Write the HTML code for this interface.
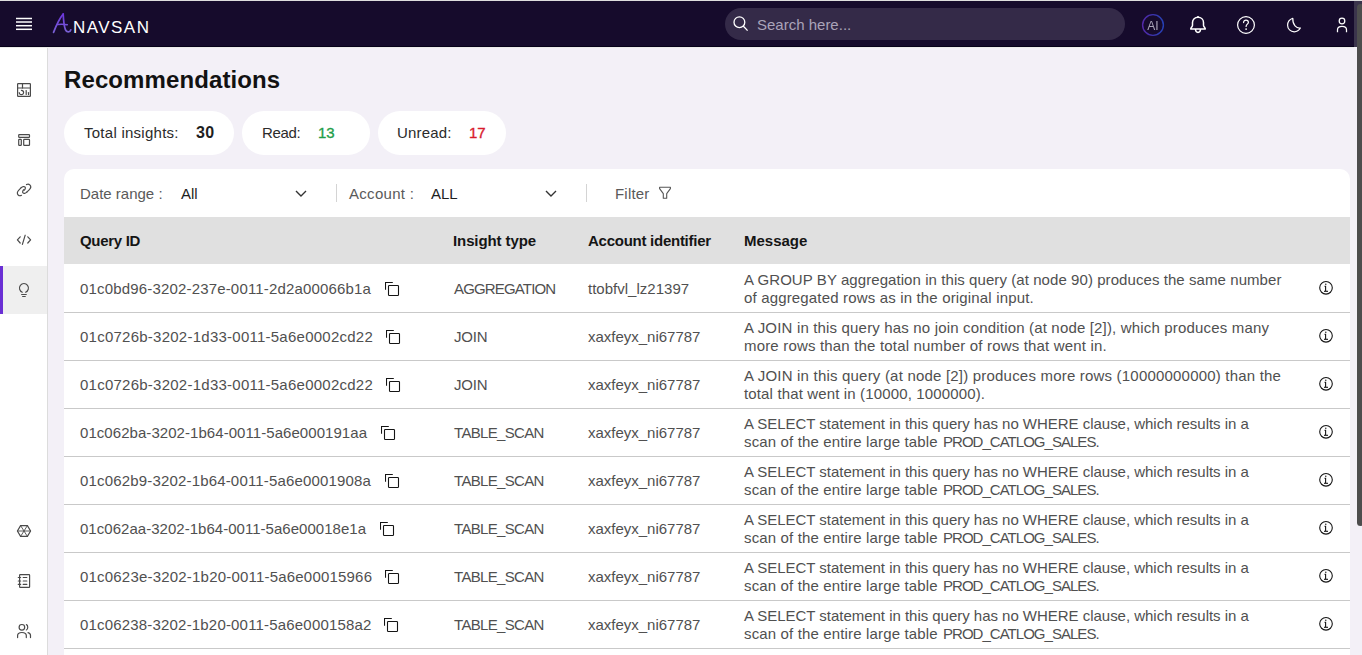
<!DOCTYPE html>
<html><head><meta charset="utf-8">
<style>
*{box-sizing:border-box;margin:0;padding:0}
html,body{width:1362px;height:655px;overflow:hidden;background:#f3f0f7;font-family:"Liberation Sans",sans-serif;}
.abs{position:absolute}
#topline{left:0;top:0;width:1362px;height:1px;background:#dedede}
#hdr{left:0;top:1px;width:1354px;height:45px;background:#160b2c}
#hdrline{left:0;top:46px;width:1354px;height:1px;background:#07011a}
#hdrshadow{left:0;top:47px;width:1354px;height:1px;background:#ececea}
#track{left:1354px;top:1px;width:8px;height:46px;background:#3b344c}
#thumb{left:1357px;top:4px;width:7px;height:522px;background:#4d4d4d;border-radius:4px}
#side{left:0;top:48px;width:47px;height:607px;background:#fff}
#sideborder{left:47px;top:48px;width:1px;height:607px;background:#dcdcdc}
.txt{white-space:nowrap;line-height:18px;font-size:15px}
#search{left:725px;top:8px;width:400px;height:32px;border-radius:16px;background:#342a48}
#title{left:64px;top:66px;font-size:24px;font-weight:700;color:#121212;line-height:28px;white-space:nowrap}
.card{top:111px;height:44px;border-radius:22px;background:#fff}
#filter{left:64px;top:169px;width:1286px;height:490px;background:#fff;border-radius:10px 10px 0 0}
#thead{left:64px;top:217px;width:1286px;height:47px;background:#e0e0e0}
.th{font-weight:700;color:#151515}
.td{color:#505050}
.rowline{left:64px;width:1286px;height:1px;background:#c9c9c9}
.sep{width:1px;height:18px;top:184px;background:#d4d4d4}
</style></head><body>
<div class="abs" id="topline"></div>
<div class="abs" id="hdr"></div>
<div class="abs" id="hdrline"></div>
<div class="abs" id="hdrshadow"></div>
<div class="abs" id="track"></div>

<!-- hamburger -->
<svg class="abs" style="left:0;top:0" width="48" height="47">
  <g stroke="#fff" stroke-width="1.5">
    <line x1="16" y1="18.5" x2="32" y2="18.5"/>
    <line x1="16" y1="22" x2="32" y2="22"/>
    <line x1="16" y1="25.7" x2="32" y2="25.7"/>
    <line x1="16" y1="29.3" x2="32" y2="29.3"/>
  </g>
</svg>
<!-- logo -->
<svg class="abs" style="left:0;top:0" width="80" height="47">
  <defs><linearGradient id="lg" x1="0" y1="13" x2="0" y2="33" gradientUnits="userSpaceOnUse"><stop offset="0" stop-color="#6c34de"/><stop offset="1" stop-color="#7a62d4"/></linearGradient></defs>
  <g fill="none" stroke="url(#lg)" stroke-linecap="round">
    <path d="M53.6,32.3 C55.8,26.5 58.8,19.5 63.2,14" stroke-width="1.8"/>
    <path d="M63.2,14 C63.5,20.5 64,26 65.4,29.6 C66.6,32.6 70,32.8 70.8,29.8" stroke-width="1.7"/>
    <path d="M57.6,24.4 C61,24 64.2,24.1 67.3,24.7" stroke-width="1.5"/>
  </g>
</svg>
<div class="abs txt" style="left:73px;top:19px;font-size:17px;line-height:18px;color:#fff;letter-spacing:1.46px">NAVSAN</div>

<div class="abs" id="search"></div>
<svg class="abs" style="left:725px;top:8px" width="40" height="32">
  <g fill="none" stroke="#fff" stroke-width="1.3">
    <circle cx="14.4" cy="14.2" r="5.4"/>
    <line x1="18.2" y1="18" x2="22.6" y2="22.6"/>
  </g>
</svg>
<div class="abs txt" style="left:757px;top:16px;color:#aaa3b8">Search here...</div>

<!-- AI -->
<svg class="abs" style="left:1140px;top:12px" width="26" height="26">
  <defs><linearGradient id="aig" x1="0" y1="0" x2="1" y2="0"><stop offset="0" stop-color="#5328a8"/><stop offset="1" stop-color="#2540b4"/></linearGradient></defs>
  <circle cx="13" cy="13" r="10.4" fill="none" stroke="url(#aig)" stroke-width="1.4"/>
</svg>
<div class="abs txt" style="left:1143px;top:17px;width:20px;text-align:center;font-size:12px;color:#aaa4b8;will-change:transform">AI</div>
<!-- bell -->
<svg class="abs" style="left:1186px;top:13px" width="24" height="26">
  <g fill="none" stroke="#fff" stroke-width="1.5" stroke-linejoin="round">
    <path d="M4.7,15.9 C4.7,14.6 6.5,13.8 6.5,12.2 L6.5,9.6 C6.5,6.4 8.9,4.2 12,4.2 C15.1,4.2 17.5,6.4 17.5,9.6 L17.5,12.2 C17.5,13.8 19.3,14.6 19.3,15.9 Z"/>
    <path d="M12,4.2 L12,3"/>
    <path d="M9.5,16.1 C9.5,20.6 14.5,20.6 14.5,16.1"/>
  </g>
</svg>
<!-- help -->
<svg class="abs" style="left:1234px;top:13px" width="24" height="24">
  <g fill="none" stroke="#fff" stroke-width="1.2">
    <circle cx="12" cy="12" r="8.4"/>
    <path d="M9.6,9.6 C9.6,8 10.7,7.1 12,7.1 C13.4,7.1 14.4,8 14.4,9.4 C14.4,11 12.1,11.4 12.1,13.4" stroke-linecap="round"/>
  </g>
  <circle cx="12.1" cy="16.1" r="0.9" fill="#fff"/>
</svg>
<!-- moon -->
<svg class="abs" style="left:1282px;top:13px" width="24" height="24">
  <path d="M10.8,5.3 C7.6,6.4 5.6,9.2 5.6,12.3 C5.6,16 8.6,18.8 12.2,18.8 C14.9,18.8 17.1,17.3 18.4,15 C14.5,15.5 10.5,12 10.8,5.3 Z" fill="none" stroke="#fff" stroke-width="1.2" stroke-linejoin="round"/>
</svg>
<!-- user -->
<svg class="abs" style="left:1330px;top:13px" width="24" height="24">
  <g fill="none" stroke="#fff" stroke-width="1.25">
    <circle cx="12" cy="8" r="2.8"/>
    <path d="M7.5,19.3 L7.5,16.8 C7.5,14.6 9.5,13.4 12,13.4 C14.5,13.4 16.5,14.6 16.5,16.8 L16.5,19.3"/>
  </g>
</svg>

<!-- sidebar -->
<div class="abs" id="side"></div>
<div class="abs" id="sideborder"></div>
<div class="abs" style="left:0;top:266px;width:47px;height:48px;background:#efefef"></div>
<div class="abs" style="left:0;top:266px;width:3px;height:48px;background:#6a2fd4"></div>
<svg class="abs" style="left:0;top:48px" width="47" height="607">
  <g fill="none" stroke="#4a4a4a" stroke-width="1.2" stroke-linecap="round" stroke-linejoin="round" transform="translate(0,-48)">
    <!-- dashboard -->
    <rect x="17.6" y="83.6" width="12.8" height="12.8" rx="0.6"/>
    <line x1="17.6" y1="88" x2="30.4" y2="88"/>
    <line x1="22.5" y1="83.6" x2="22.5" y2="88"/>
    <path d="M21.4,90.3 A2.2,2.2 0 1 1 19.2,92.5"/>
    <line x1="26.2" y1="90.6" x2="26.2" y2="94.4"/>
    <line x1="28.5" y1="92.6" x2="28.5" y2="94.6"/>
    <!-- layout -->
    <rect x="18.7" y="134.7" width="10.8" height="2.6" rx="0.6"/>
    <rect x="18.7" y="139.4" width="2.6" height="6" rx="0.6"/>
    <rect x="23.7" y="139.4" width="5.8" height="6" rx="0.6"/>
    <!-- link -->
    <path d="M21.2,187.7 L18.6,190.3 C17,191.9 17,193.8 18.2,195 C19.3,196 20.6,195.8 21.5,195.3"/>
    <path d="M26.8,192.2 L29.4,189.6 C31,188 31,186.1 29.8,184.9 C28.7,183.9 27.4,184.1 26.5,184.6"/>
    <path d="M21.2,187.7 C22.5,186.4 24.3,186.2 25,187 C25.8,187.8 25.2,189.4 24.2,190.2"/>
    <path d="M26.8,192.2 C25.5,193.5 23.7,193.7 23,192.9 C22.2,192.1 22.8,190.5 23.8,189.7"/>
    <!-- code -->
    <path d="M20.2,236.8 L17.4,239.9 L20.2,243"/>
    <path d="M27.8,236.8 L30.6,239.9 L27.8,243"/>
    <line x1="25.2" y1="235.2" x2="22.4" y2="244.4"/>
    <!-- bulb -->
    <path d="M22.3,292.2 A4.5,4.5 0 1 1 25.6,292.2" stroke-width="1.1"/>
    <line x1="21.6" y1="294.5" x2="26.3" y2="294.5" stroke-width="1.1"/>
    <line x1="22.6" y1="296.5" x2="25.3" y2="296.5" stroke-width="1.1"/>
    <!-- hexagon -->
    <path d="M20.6,525.6 L27.4,525.6 L30.6,531 L27.4,536.4 L20.6,536.4 L17.4,531 Z"/>
    <path d="M20.6,525.6 L27.4,536.4 M27.4,525.6 L20.6,536.4 M17.4,531 L30.6,531" stroke-width="0.9"/>
    <!-- notebook -->
    <rect x="19.6" y="574.6" width="10" height="12.8" rx="0.6"/>
    <line x1="18.3" y1="577.5" x2="20.6" y2="577.5"/>
    <line x1="18.3" y1="581" x2="20.6" y2="581"/>
    <line x1="18.3" y1="584.4" x2="20.6" y2="584.4"/>
    <line x1="23.2" y1="577.5" x2="26.8" y2="577.5"/>
    <line x1="23.2" y1="581" x2="26.8" y2="581"/>
    <line x1="23.2" y1="584.4" x2="26.8" y2="584.4"/>
    <!-- users -->
    <circle cx="21.9" cy="627.3" r="2.8"/>
    <path d="M17.6,637.6 L17.6,635.6 C17.6,633.6 19.2,632.5 21.9,632.5 C24.6,632.5 26.3,633.6 26.3,635.6 L26.3,637.6"/>
    <path d="M26.4,624.6 C28.2,625.2 28.2,629.4 26.4,630"/>
    <path d="M28,632.6 C29.6,633 30.5,634.2 30.5,635.6 L30.5,637.6"/>
  </g>
</svg>

<!-- content -->
<div class="abs" id="title" style="letter-spacing:0.1px">Recommendations</div>

<div class="abs card" style="left:64px;width:170px"></div>
<div class="abs card" style="left:242px;width:128px"></div>
<div class="abs card" style="left:378px;width:128px"></div>
<div class="abs txt" style="left:84px;top:124px;color:#2b2b2b;letter-spacing:0.26px">Total insights:</div>
<div class="abs txt" style="left:196px;top:124px;color:#1e1e1e;font-weight:700;font-size:16px;letter-spacing:0.4px">30</div>
<div class="abs txt" style="left:262px;top:124px;color:#2b2b2b;letter-spacing:-0.35px">Read:</div>
<div class="abs txt" style="left:318px;top:124px;color:#1f9e4a;-webkit-text-stroke:0.35px #1f9e4a">13</div>
<div class="abs txt" style="left:397px;top:124px;color:#2b2b2b;letter-spacing:0.17px">Unread:</div>
<div class="abs txt" style="left:469px;top:124px;color:#d81b2e;-webkit-text-stroke:0.35px #d81b2e">17</div>

<div class="abs" id="filter"></div>
<div class="abs txt" style="left:80px;top:185px;color:#5a5a5a">Date range :</div>
<div class="abs txt" style="left:181px;top:185px;color:#1e1e1e">All</div>
<svg class="abs" style="left:294px;top:188px" width="14" height="12"><path d="M2,3 L7,8 L12,3" fill="none" stroke="#333" stroke-width="1.4"/></svg>
<div class="abs sep" style="left:336px"></div>
<div class="abs txt" style="left:349px;top:185px;color:#5a5a5a;letter-spacing:0.3px">Account :</div>
<div class="abs txt" style="left:431px;top:185px;color:#1e1e1e">ALL</div>
<svg class="abs" style="left:544px;top:188px" width="14" height="12"><path d="M2,3 L7,8 L12,3" fill="none" stroke="#333" stroke-width="1.4"/></svg>
<div class="abs sep" style="left:586px"></div>
<div class="abs txt" style="left:615px;top:185px;color:#5a5a5a;letter-spacing:0.2px">Filter</div>
<svg class="abs" style="left:657px;top:185px" width="16" height="16"><path d="M2.6,2.3 L13.4,2.3 L13.4,3.7 L9.7,8.6 L9.7,13.3 L6.3,13.3 L6.3,8.6 L2.6,3.7 Z" fill="none" stroke="#555" stroke-width="1.1" stroke-linejoin="round"/></svg>

<div class="abs" id="thead"></div>
<div class="abs txt th" style="left:80px;top:232px;letter-spacing:-0.3px">Query ID</div>
<div class="abs txt th" style="left:453px;top:232px;letter-spacing:-0.1px">Insight type</div>
<div class="abs txt th" style="left:588px;top:232px;letter-spacing:-0.26px">Account identifier</div>
<div class="abs txt th" style="left:744px;top:232px">Message</div>

<div class="abs txt td" style="left:80px;top:280px;letter-spacing:0.171px">01c0bd96-3202-237e-0011-2d2a00066b1a</div>
<svg class="abs" style="left:385px;top:281px" width="16" height="16"><g fill="none" stroke="#151515" stroke-width="1.1"><path d="M0.5,8.8 L0.5,1.5 L7.8,1.5"/><rect x="3.5" y="4.5" width="10" height="10" rx="0.8"/></g></svg>
<div class="abs txt td" style="left:454px;top:280px;letter-spacing:-0.840px">AGGREGATION</div>
<div class="abs txt td" style="left:588px;top:280px;letter-spacing:0.014px">ttobfvl_lz21397</div>
<div class="abs txt td" style="left:744px;top:271px;letter-spacing:0.071px">A GROUP BY aggregation in this query (at node 90) produces the same number</div>
<div class="abs txt td" style="left:744px;top:289px;letter-spacing:0.163px">of aggregated rows as in the original input.</div>
<svg class="abs" style="left:1318px;top:280px" width="16" height="16"><circle cx="8" cy="7.8" r="6.3" fill="none" stroke="#151515" stroke-width="1.1"/><g stroke="#151515" stroke-width="1.1" fill="none"><path d="M6.6,6.4 L7.6,6.4 L7.6,11"/><line x1="6" y1="11.3" x2="10" y2="11.3"/></g><circle cx="7.8" cy="4.3" r="0.7" fill="#151515"/></svg>
<div class="abs rowline" style="top:312px"></div>
<div class="abs txt td" style="left:80px;top:328px;letter-spacing:0.246px">01c0726b-3202-1d33-0011-5a6e0002cd22</div>
<svg class="abs" style="left:386px;top:329px" width="16" height="16"><g fill="none" stroke="#151515" stroke-width="1.1"><path d="M0.5,8.8 L0.5,1.5 L7.8,1.5"/><rect x="3.5" y="4.5" width="10" height="10" rx="0.8"/></g></svg>
<div class="abs txt td" style="left:454px;top:328px;letter-spacing:-0.200px">JOIN</div>
<div class="abs txt td" style="left:588px;top:328px;letter-spacing:-0.014px">xaxfeyx_ni67787</div>
<div class="abs txt td" style="left:744px;top:319px;letter-spacing:0.171px">A JOIN in this query has no join condition (at node [2]), which produces many</div>
<div class="abs txt td" style="left:744px;top:337px;letter-spacing:0.177px">more rows than the total number of rows that went in.</div>
<svg class="abs" style="left:1318px;top:328px" width="16" height="16"><circle cx="8" cy="7.8" r="6.3" fill="none" stroke="#151515" stroke-width="1.1"/><g stroke="#151515" stroke-width="1.1" fill="none"><path d="M6.6,6.4 L7.6,6.4 L7.6,11"/><line x1="6" y1="11.3" x2="10" y2="11.3"/></g><circle cx="7.8" cy="4.3" r="0.7" fill="#151515"/></svg>
<div class="abs rowline" style="top:360px"></div>
<div class="abs txt td" style="left:80px;top:376px;letter-spacing:0.246px">01c0726b-3202-1d33-0011-5a6e0002cd22</div>
<svg class="abs" style="left:386px;top:377px" width="16" height="16"><g fill="none" stroke="#151515" stroke-width="1.1"><path d="M0.5,8.8 L0.5,1.5 L7.8,1.5"/><rect x="3.5" y="4.5" width="10" height="10" rx="0.8"/></g></svg>
<div class="abs txt td" style="left:454px;top:376px;letter-spacing:-0.200px">JOIN</div>
<div class="abs txt td" style="left:588px;top:376px;letter-spacing:-0.014px">xaxfeyx_ni67787</div>
<div class="abs txt td" style="left:744px;top:367px;letter-spacing:0.200px">A JOIN in this query (at node [2]) produces more rows (10000000000) than the</div>
<div class="abs txt td" style="left:744px;top:385px;letter-spacing:0.143px">total that went in (10000, 1000000).</div>
<svg class="abs" style="left:1318px;top:376px" width="16" height="16"><circle cx="8" cy="7.8" r="6.3" fill="none" stroke="#151515" stroke-width="1.1"/><g stroke="#151515" stroke-width="1.1" fill="none"><path d="M6.6,6.4 L7.6,6.4 L7.6,11"/><line x1="6" y1="11.3" x2="10" y2="11.3"/></g><circle cx="7.8" cy="4.3" r="0.7" fill="#151515"/></svg>
<div class="abs rowline" style="top:408px"></div>
<div class="abs txt td" style="left:80px;top:424px;letter-spacing:0.057px">01c062ba-3202-1b64-0011-5a6e000191aa</div>
<svg class="abs" style="left:381px;top:425px" width="16" height="16"><g fill="none" stroke="#151515" stroke-width="1.1"><path d="M0.5,8.8 L0.5,1.5 L7.8,1.5"/><rect x="3.5" y="4.5" width="10" height="10" rx="0.8"/></g></svg>
<div class="abs txt td" style="left:454px;top:424px;letter-spacing:-0.667px">TABLE_SCAN</div>
<div class="abs txt td" style="left:588px;top:424px;letter-spacing:-0.014px">xaxfeyx_ni67787</div>
<div class="abs txt td" style="left:744px;top:415px;letter-spacing:-0.025px">A SELECT statement in this query has no WHERE clause, which results in a</div>
<div class="abs txt td" style="left:744px;top:433px;letter-spacing:0.148px">scan of the entire large table</div>
<div class="abs txt td" style="left:943px;top:433px;letter-spacing:-0.971px">PROD_CATLOG_SALES.</div>
<svg class="abs" style="left:1318px;top:424px" width="16" height="16"><circle cx="8" cy="7.8" r="6.3" fill="none" stroke="#151515" stroke-width="1.1"/><g stroke="#151515" stroke-width="1.1" fill="none"><path d="M6.6,6.4 L7.6,6.4 L7.6,11"/><line x1="6" y1="11.3" x2="10" y2="11.3"/></g><circle cx="7.8" cy="4.3" r="0.7" fill="#151515"/></svg>
<div class="abs rowline" style="top:456px"></div>
<div class="abs txt td" style="left:80px;top:472px;letter-spacing:0.171px">01c062b9-3202-1b64-0011-5a6e0001908a</div>
<svg class="abs" style="left:385px;top:473px" width="16" height="16"><g fill="none" stroke="#151515" stroke-width="1.1"><path d="M0.5,8.8 L0.5,1.5 L7.8,1.5"/><rect x="3.5" y="4.5" width="10" height="10" rx="0.8"/></g></svg>
<div class="abs txt td" style="left:454px;top:472px;letter-spacing:-0.667px">TABLE_SCAN</div>
<div class="abs txt td" style="left:588px;top:472px;letter-spacing:-0.014px">xaxfeyx_ni67787</div>
<div class="abs txt td" style="left:744px;top:463px;letter-spacing:-0.025px">A SELECT statement in this query has no WHERE clause, which results in a</div>
<div class="abs txt td" style="left:744px;top:481px;letter-spacing:0.148px">scan of the entire large table</div>
<div class="abs txt td" style="left:943px;top:481px;letter-spacing:-0.971px">PROD_CATLOG_SALES.</div>
<svg class="abs" style="left:1318px;top:472px" width="16" height="16"><circle cx="8" cy="7.8" r="6.3" fill="none" stroke="#151515" stroke-width="1.1"/><g stroke="#151515" stroke-width="1.1" fill="none"><path d="M6.6,6.4 L7.6,6.4 L7.6,11"/><line x1="6" y1="11.3" x2="10" y2="11.3"/></g><circle cx="7.8" cy="4.3" r="0.7" fill="#151515"/></svg>
<div class="abs rowline" style="top:504px"></div>
<div class="abs txt td" style="left:80px;top:520px;letter-spacing:0.029px">01c062aa-3202-1b64-0011-5a6e00018e1a</div>
<svg class="abs" style="left:380px;top:521px" width="16" height="16"><g fill="none" stroke="#151515" stroke-width="1.1"><path d="M0.5,8.8 L0.5,1.5 L7.8,1.5"/><rect x="3.5" y="4.5" width="10" height="10" rx="0.8"/></g></svg>
<div class="abs txt td" style="left:454px;top:520px;letter-spacing:-0.667px">TABLE_SCAN</div>
<div class="abs txt td" style="left:588px;top:520px;letter-spacing:-0.014px">xaxfeyx_ni67787</div>
<div class="abs txt td" style="left:744px;top:511px;letter-spacing:-0.025px">A SELECT statement in this query has no WHERE clause, which results in a</div>
<div class="abs txt td" style="left:744px;top:529px;letter-spacing:0.148px">scan of the entire large table</div>
<div class="abs txt td" style="left:943px;top:529px;letter-spacing:-0.971px">PROD_CATLOG_SALES.</div>
<svg class="abs" style="left:1318px;top:520px" width="16" height="16"><circle cx="8" cy="7.8" r="6.3" fill="none" stroke="#151515" stroke-width="1.1"/><g stroke="#151515" stroke-width="1.1" fill="none"><path d="M6.6,6.4 L7.6,6.4 L7.6,11"/><line x1="6" y1="11.3" x2="10" y2="11.3"/></g><circle cx="7.8" cy="4.3" r="0.7" fill="#151515"/></svg>
<div class="abs rowline" style="top:552px"></div>
<div class="abs txt td" style="left:80px;top:568px;letter-spacing:0.200px">01c0623e-3202-1b20-0011-5a6e00015966</div>
<svg class="abs" style="left:385px;top:569px" width="16" height="16"><g fill="none" stroke="#151515" stroke-width="1.1"><path d="M0.5,8.8 L0.5,1.5 L7.8,1.5"/><rect x="3.5" y="4.5" width="10" height="10" rx="0.8"/></g></svg>
<div class="abs txt td" style="left:454px;top:568px;letter-spacing:-0.667px">TABLE_SCAN</div>
<div class="abs txt td" style="left:588px;top:568px;letter-spacing:-0.014px">xaxfeyx_ni67787</div>
<div class="abs txt td" style="left:744px;top:559px;letter-spacing:-0.025px">A SELECT statement in this query has no WHERE clause, which results in a</div>
<div class="abs txt td" style="left:744px;top:577px;letter-spacing:0.148px">scan of the entire large table</div>
<div class="abs txt td" style="left:943px;top:577px;letter-spacing:-0.971px">PROD_CATLOG_SALES.</div>
<svg class="abs" style="left:1318px;top:568px" width="16" height="16"><circle cx="8" cy="7.8" r="6.3" fill="none" stroke="#151515" stroke-width="1.1"/><g stroke="#151515" stroke-width="1.1" fill="none"><path d="M6.6,6.4 L7.6,6.4 L7.6,11"/><line x1="6" y1="11.3" x2="10" y2="11.3"/></g><circle cx="7.8" cy="4.3" r="0.7" fill="#151515"/></svg>
<div class="abs rowline" style="top:600px"></div>
<div class="abs txt td" style="left:80px;top:616px;letter-spacing:0.183px">01c06238-3202-1b20-0011-5a6e000158a2</div>
<svg class="abs" style="left:384px;top:617px" width="16" height="16"><g fill="none" stroke="#151515" stroke-width="1.1"><path d="M0.5,8.8 L0.5,1.5 L7.8,1.5"/><rect x="3.5" y="4.5" width="10" height="10" rx="0.8"/></g></svg>
<div class="abs txt td" style="left:454px;top:616px;letter-spacing:-0.667px">TABLE_SCAN</div>
<div class="abs txt td" style="left:588px;top:616px;letter-spacing:-0.014px">xaxfeyx_ni67787</div>
<div class="abs txt td" style="left:744px;top:607px;letter-spacing:-0.025px">A SELECT statement in this query has no WHERE clause, which results in a</div>
<div class="abs txt td" style="left:744px;top:625px;letter-spacing:0.148px">scan of the entire large table</div>
<div class="abs txt td" style="left:943px;top:625px;letter-spacing:-0.971px">PROD_CATLOG_SALES.</div>
<svg class="abs" style="left:1318px;top:616px" width="16" height="16"><circle cx="8" cy="7.8" r="6.3" fill="none" stroke="#151515" stroke-width="1.1"/><g stroke="#151515" stroke-width="1.1" fill="none"><path d="M6.6,6.4 L7.6,6.4 L7.6,11"/><line x1="6" y1="11.3" x2="10" y2="11.3"/></g><circle cx="7.8" cy="4.3" r="0.7" fill="#151515"/></svg>
<div class="abs rowline" style="top:648px"></div>
<div class="abs" id="thumb"></div>
</body></html>
